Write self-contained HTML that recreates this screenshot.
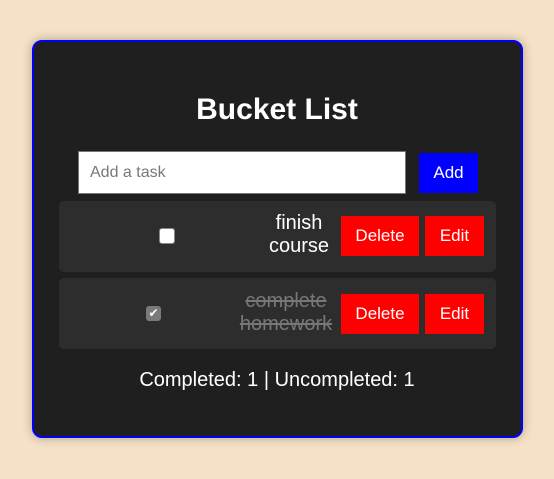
<!DOCTYPE html>
<html><head><style>
*{box-sizing:border-box;margin:0;padding:0}
body{width:554px;height:479px;background:#f5e1c6;font-family:"Liberation Sans",Arial,sans-serif;position:relative;overflow:hidden}
.card{position:absolute;left:32px;top:40px;width:491px;height:398px;background:#1f1f1f;border:2px solid #0000ff;border-radius:10px;box-shadow:0 0 10px rgba(0,0,0,.3)}
.abs{position:absolute}
h1{position:absolute;left:0;width:100%;top:93px;text-align:center;color:#fff;font-size:30px;font-weight:bold}
.inp{left:78px;top:151px;width:328px;height:43px;background:#fff;border:1px solid #767676;color:#777;font-size:16px;padding:12px 11px}
.add{left:419px;top:153px;width:59px;height:40px;background:#0000ff;color:#fff;font-size:17px;text-align:center;line-height:40px}
.row{left:59px;width:437px;height:71px;background:#2d2d2d;border-radius:5px}
.btn{background:#ff0000;color:#fff;font-size:17px;text-align:center;line-height:40px;height:40px}
.txt{color:#fff;font-size:20px;text-align:center;line-height:23px;white-space:nowrap}
.done{color:#777;text-decoration:line-through}
.foot{left:0;width:100%;top:369px;text-align:center;color:#fff;font-size:20px}
</style></head><body>
<div class="card"></div>
<h1>Bucket List</h1>
<div class="abs inp">Add a task</div>
<div class="abs add">Add</div>
<div class="abs row" style="top:201px"></div>
<div class="abs row" style="top:278px"></div>
<div class="abs" style="left:159px;top:228px;width:16px;height:16px;background:#fff;border:1px solid #888;border-radius:3px"></div>
<div class="abs txt" style="left:249px;width:100px;top:212px">finish<br>course</div>
<div class="abs txt done" style="left:236px;width:100px;top:290px">complete<br>homework</div>
<div class="abs btn" style="left:341px;top:216px;width:78px">Delete</div>
<div class="abs btn" style="left:425px;top:216px;width:59px">Edit</div>
<div class="abs" style="left:146px;top:306px;width:15px;height:15px;background:#7a7a7a;border-radius:3px;color:#fff;font-size:12px;line-height:15px;text-align:center">✔</div>
<div class="abs btn" style="left:341px;top:294px;width:78px">Delete</div>
<div class="abs btn" style="left:425px;top:294px;width:59px">Edit</div>
<div class="abs foot">Completed: 1 | Uncompleted: 1</div>
</body></html>
